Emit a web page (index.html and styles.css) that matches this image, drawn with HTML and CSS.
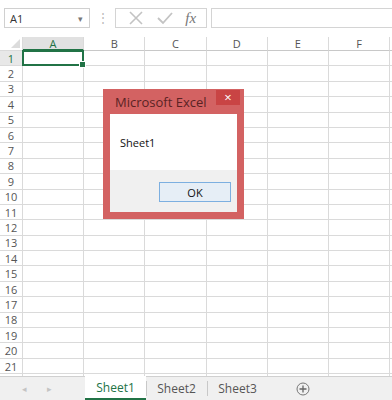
FILE: index.html
```html
<!DOCTYPE html>
<html>
<head>
    <title>Microsoft Excel</title>
    <link rel="stylesheet" href="styles.css">
</head>
<body>
    <div class="window">
        <div class="toolbar">
            <div class="name-box">
                <span>A1</span>
                <span class="caret">&#9662;</span>
            </div>
            <div class="grip">&#8942;</div>
            <div class="fx-buttons">
                <svg width="16" height="16" viewBox="0 0 16 16"><path d="M2 2 L14 14 M14 2 L2 14" stroke="#c3c3c3" stroke-width="1.6" fill="none"/></svg>
                <svg width="18" height="16" viewBox="0 0 18 16"><path d="M2 8 L7 13 L16 3" stroke="#c3c3c3" stroke-width="1.8" fill="none"/></svg>
                <span class="fx">fx</span>
            </div>
            <div class="formula"></div>
        </div>

        <div class="sheet">
            <div class="grid" id="grid"></div>

            <div class="dialog">
                <div class="dialog-title">
                    <span>Microsoft Excel</span>
                    <div class="close">&#215;</div>
                </div>
                <div class="dialog-body">
                    <div class="message">Sheet1</div>
                    <div class="dialog-footer">
                        <button class="ok">OK</button>
                    </div>
                </div>
            </div>
        </div>

        <div class="tabs">
            <div class="nav"><span>&#9666;</span><span>&#9656;</span></div>
            <div class="tab active">Sheet1</div>
            <div class="tab">Sheet2</div>
            <div class="tab">Sheet3</div>
            <div class="add">
                <svg width="14" height="14" viewBox="0 0 14 14"><circle cx="7" cy="7" r="6" stroke="#777" stroke-width="1" fill="none"/><path d="M7 3.5 V10.5 M3.5 7 H10.5" stroke="#666" stroke-width="1.3"/></svg>
            </div>
        </div>
    </div>

    <script>
        const grid = document.getElementById('grid');
        const cols = ['A', 'B', 'C', 'D', 'E', 'F', ''];
        let html = '<div class="corner"><span class="tri"></span></div>';
        cols.forEach((c, i) => {
            html += `<div class="col-head${i === 0 ? ' sel' : ''}">${c}</div>`;
        });
        for (let r = 1; r <= 21; r++) {
            html += `<div class="row-head${r === 1 ? ' sel' : ''}">${r}</div>`;
            cols.forEach((c, i) => {
                const active = (r === 1 && i === 0) ? ' active' : '';
                html += `<div class="cell${active}"></div>`;
            });
        }
        html += '<div class="row-head"></div>';
        cols.forEach(() => { html += '<div class="cell"></div>'; });
        grid.innerHTML = html;
    </script>
</body>
</html>
```

FILE: styles.css
```css
body {
    margin: 0;
    font-family: 'Open Sans', 'Noto Sans', sans-serif;
    color: #444;
    background: #fff;
}

.window {
    width: 392px;
    height: 400px;
    overflow: hidden;
    display: flex;
    flex-direction: column;
}

.toolbar {
    height: 37px;
    flex-shrink: 0;
    display: flex;
    align-items: flex-start;
    padding-top: 8px;
    padding-left: 4px;
    box-sizing: border-box;
}

.name-box {
    width: 86px;
    height: 20px;
    border: 1px solid #d0d0d0;
    box-sizing: border-box;
    display: flex;
    align-items: center;
    justify-content: space-between;
    padding: 0 6px 0 5px;
    font-size: 11px;
    color: #333;
}

.caret {
    font-size: 9px;
    color: #777;
}

.grip {
    width: 25px;
    text-align: center;
    color: #b8b8b8;
    font-size: 12px;
    line-height: 20px;
}

.fx-buttons {
    width: 92px;
    height: 20px;
    border: 1px solid #d4d4d4;
    box-sizing: border-box;
    display: flex;
    align-items: center;
    justify-content: space-around;
    padding: 0 4px 0 6px;
}

.fx {
    font-family: 'Liberation Serif', 'DejaVu Serif', serif;
    font-style: italic;
    font-size: 15px;
    color: #777;
    line-height: 16px;
}

.formula {
    flex: 1;
    height: 20px;
    margin-left: 4px;
    border: 1px solid #d4d4d4;
    border-right: none;
    box-sizing: border-box;
}

.sheet {
    flex: 1;
    position: relative;
    overflow: hidden;
}

.grid {
    display: grid;
    grid-template-columns: 23px repeat(7, 61.2px);
    grid-template-rows: 14px;
    grid-auto-rows: 15.4px;
}

.grid > div {
    box-sizing: border-box;
    border-right: 1px solid #dadada;
    border-bottom: 1px solid #dadada;
}

.corner {
    position: relative;
    background: #fff;
}

.tri {
    position: absolute;
    right: 2px;
    bottom: 2px;
    border-left: 9px solid transparent;
    border-bottom: 9px solid #dcdcdc;
}

.col-head, .row-head {
    background: #fff;
    font-size: 11px;
    color: #555;
    display: flex;
    align-items: center;
    justify-content: center;
}

.grid > .col-head {
    border-bottom-color: #c8c8c8;
}

.col-head.sel {
    background: #e1e1e1;
    color: #217346;
    border-bottom: 2px solid #217346;
}

.row-head.sel {
    background: #e8e8e8;
    color: #217346;
}

.cell {
    background: #fff;
}

.grid > .cell.active {
    position: relative;
    border: 2px solid #217346;
    margin: -1px 0 0 -1px;
}

.cell.active::after {
    content: '';
    position: absolute;
    right: -4px;
    bottom: -4px;
    width: 5px;
    height: 5px;
    background: #217346;
    border: 1px solid #fff;
}

.dialog {
    position: absolute;
    left: 103px;
    top: 52px;
    width: 141px;
    height: 130px;
    background: #d36262;
    box-sizing: border-box;
    padding: 0 7px 7px 7px;
    display: flex;
    flex-direction: column;
}

.dialog-title {
    height: 25px;
    flex-shrink: 0;
    display: flex;
    justify-content: space-between;
    align-items: flex-start;
    font-size: 13px;
    color: #5a2324;
}

.dialog-title span {
    padding: 4px 0 0 5px;
}

.close {
    width: 24px;
    height: 15px;
    margin: 1px -3px 0 0;
    background: #c94444;
    color: #fff;
    font-size: 13px;
    line-height: 14px;
    text-align: center;
}

.dialog-body {
    flex: 1;
    background: #fff;
    display: flex;
    flex-direction: column;
}

.message {
    height: 56px;
    padding: 21px 0 0 10px;
    box-sizing: border-box;
    font-size: 11px;
    color: #111;
}

.dialog-footer {
    flex: 1;
    background: #f0f0f0;
    display: flex;
    justify-content: flex-end;
    align-items: flex-start;
    padding: 12px 6px 0 0;
}

.ok {
    width: 72px;
    height: 20px;
    font-family: 'Open Sans', 'Noto Sans', sans-serif;
    font-size: 11px;
    color: #111;
    background: #e6eef6;
    border: 1px solid #7cafe0;
    padding: 0;
}

.tabs {
    height: 24px;
    flex-shrink: 0;
    background: #f0f0f0;
    border-top: 1px solid #d0d0d0;
    box-sizing: border-box;
    display: flex;
    align-items: stretch;
    font-size: 12px;
}

.nav {
    width: 85px;
    display: flex;
    gap: 20px;
    padding-left: 22px;
    box-sizing: border-box;
    align-items: center;
    color: #c4c4c4;
    font-size: 9px;
}

.tab {
    width: 61px;
    display: flex;
    align-items: center;
    justify-content: center;
    color: #555;
    position: relative;
}

.tab + .tab::before {
    content: '';
    position: absolute;
    left: 0;
    top: 4px;
    bottom: 4px;
    border-left: 1px solid #c8c8c8;
}

.tab:last-of-type::after {
    content: '';
    position: absolute;
    right: 0;
    top: 4px;
    bottom: 4px;
    border-left: 1px solid #c8c8c8;
}

.tab.active {
    background: #fff;
    color: #217346;
    margin-top: -1px;
    border-bottom: 2px solid #217346;
}

.add {
    width: 70px;
    display: flex;
    align-items: center;
    justify-content: center;
}
```
